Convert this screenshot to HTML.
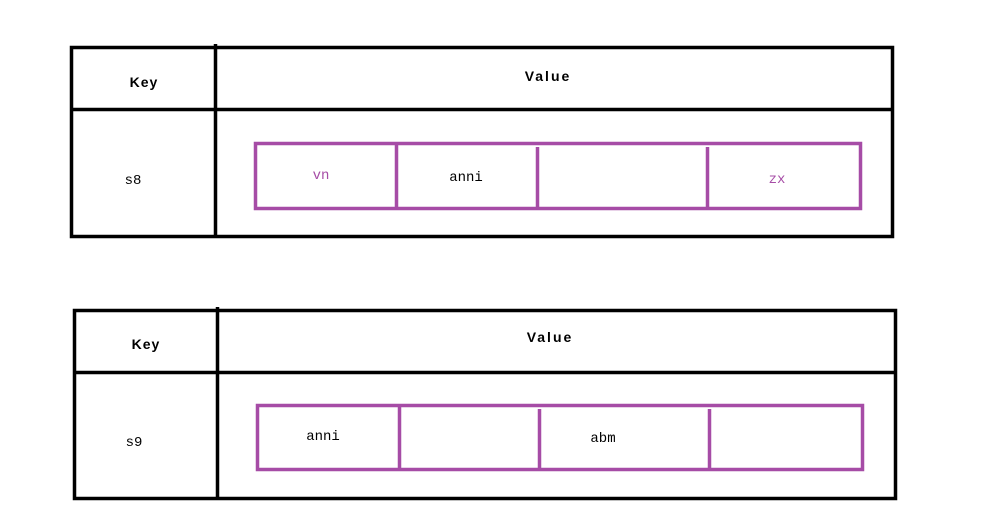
<!DOCTYPE html>
<html><head><style>body{margin:0;background:#fff}svg{display:block}</style></head><body>
<svg width="996" height="514" xmlns="http://www.w3.org/2000/svg">
<rect width="996" height="514" fill="#fff"/>
<g fill="none" stroke="#000" stroke-width="3.5">
<rect x="71.5" y="47.5" width="821" height="189"/>
<line x1="71" y1="109.5" x2="893" y2="109.5"/>
<line x1="215.5" y1="44" x2="215.5" y2="238"/>
<rect x="74.5" y="310.5" width="821" height="188"/>
<line x1="74" y1="372.5" x2="896" y2="372.5"/>
<line x1="217.5" y1="307" x2="217.5" y2="500"/>
</g>
<g fill="none" stroke="#a64ca6" stroke-width="3.5">
<rect x="255.5" y="143.5" width="605" height="65"/>
<line x1="396.5" y1="143" x2="396.5" y2="209"/>
<line x1="537.5" y1="147" x2="537.5" y2="209"/>
<line x1="707.5" y1="147" x2="707.5" y2="209"/>
<rect x="257.5" y="405.5" width="605" height="64"/>
<line x1="399.5" y1="405" x2="399.5" y2="470"/>
<line x1="539.5" y1="409" x2="539.5" y2="470"/>
<line x1="709.5" y1="409" x2="709.5" y2="470"/>
</g>
<g font-family="Liberation Sans, sans-serif" font-weight="bold" font-size="14" fill="#000" text-anchor="middle">
<text x="144" y="87" letter-spacing="1">Key</text><text x="548" y="81" letter-spacing="2">Value</text>
<text x="146" y="349" letter-spacing="1">Key</text><text x="550" y="342" letter-spacing="2">Value</text>
</g>
<g font-family="Liberation Mono, monospace" font-size="14" fill="#000" text-anchor="middle">
<text x="133" y="184">s8</text><text x="134" y="446">s9</text>
<text x="466" y="181">anni</text>
<text x="323" y="440">anni</text><text x="603" y="442">abm</text>
<text x="321" y="179" fill="#a64ca6">vn</text><text x="777" y="183" fill="#a64ca6">zx</text>
</g>
</svg>
</body></html>
